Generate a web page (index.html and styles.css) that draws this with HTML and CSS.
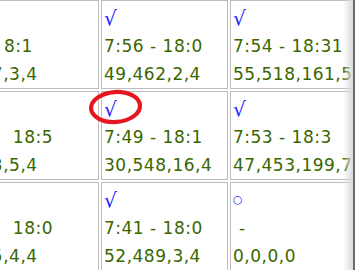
FILE: index.html
```html
<!DOCTYPE html>
<html>
<head>
<meta charset="utf-8">
<link rel="stylesheet" href="styles.css">
</head>
<body>
<div class="view">
  <table class="cal">
    <colgroup><col class="k1"><col class="k2"><col class="k3"></colgroup>
    <tr>
      <td><div class="mark">&nbsp;</div><div class="t">7:56&nbsp;&nbsp;8:1</div><div class="t">51,17,3,4</div></td>
      <td><div class="mark">√</div><div class="t">7:56 - 18:0</div><div class="t">49,462,2,4</div></td>
      <td><div class="mark">√</div><div class="t">7:54 - 18:31</div><div class="t">55,518,161,5</div></td>
    </tr>
    <tr>
      <td><div class="mark">&nbsp;</div><div class="t">7:53-&nbsp;&nbsp;&#8202;18:5</div><div class="t">44,93,5,4</div></td>
      <td><div class="mark">√</div><div class="t">7:49 - 18:1</div><div class="t">30,548,16,4</div></td>
      <td><div class="mark">√</div><div class="t">7:53 - 18:3</div><div class="t">47,453,199,7</div></td>
    </tr>
    <tr>
      <td><div class="mark">&nbsp;</div><div class="t">7:52-&nbsp;&nbsp;&#8202;18:0</div><div class="t">52,15,4,4</div></td>
      <td><div class="mark">√</div><div class="t">7:41 - 18:0</div><div class="t">52,489,3,4</div></td>
      <td><div class="mark"><span class="off">○</span></div><div class="t">&nbsp;-</div><div class="t">0,0,0,0</div></td>
    </tr>
  </table>
  <svg class="ring" width="64" height="44" viewBox="0 0 64 44">
    <ellipse cx="29.5" cy="19" rx="24.5" ry="15" fill="none" stroke="#e5161d" stroke-width="4.2" transform="rotate(-4 29.5 19)"/>
  </svg>
  <div class="edge"></div>
</div>
</body>
</html>
```
FILE: styles.css
```css
html, body {
  margin: 0;
  padding: 0;
  background: #ffffff;
  overflow: hidden;
}
.view {
  position: relative;
  width: 355px;
  height: 270px;
  overflow: hidden;
}
.cal {
  border-collapse: separate;
  border-spacing: 2px;
  table-layout: fixed;
  width: 425px;
  margin-left: -53px;
  margin-top: -2px;
}
.k1 { width: 150px; }
.k2 { width: 127px; }
.k3 { width: 140px; }
.cal td {
  box-sizing: border-box;
  border: 1px solid #bdbdbd;
  padding: 3px 2px 0;
  vertical-align: top;
  white-space: nowrap;
  overflow: hidden;
  height: 89px;
  font-family: "DejaVu Sans", sans-serif;
  font-size: 17px;
  line-height: 28px;
  letter-spacing: 0.5px;
  color: #3a6600;
}
.mark {
  color: #2222ff;
  font-size: 20px;
  height: 28px;
}
.off {
  font-size: 11px;
  vertical-align: 4px;
}
.ring {
  position: absolute;
  left: 86px;
  top: 88px;
}
.edge {
  position: absolute;
  top: 0;
  right: 0;
  width: 12px;
  height: 270px;
  background: linear-gradient(to right, rgba(220,220,220,0), #dcdcdc 80%, #6a6a6a 84%, #6a6a6a);
}
```
